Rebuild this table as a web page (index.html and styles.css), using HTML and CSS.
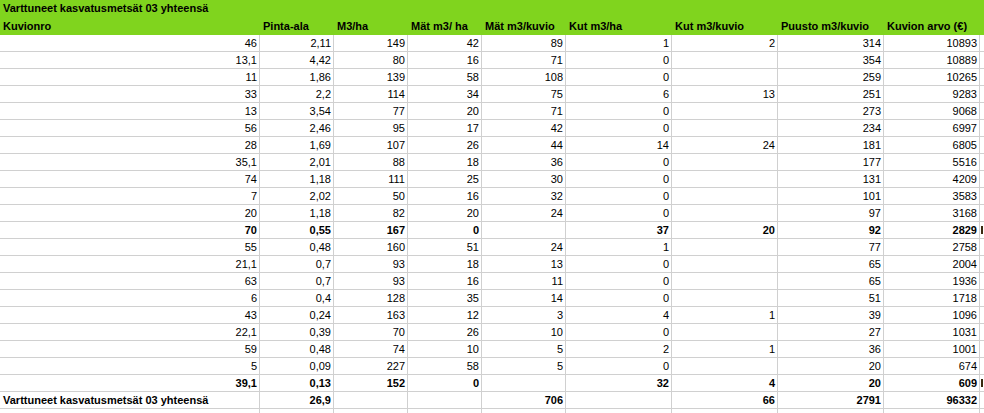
FILE: index.html
```html
<!DOCTYPE html>
<html lang="fi">
<head>
<meta charset="utf-8">
<title>Varttuneet kasvatusmetsät 03 yhteensä</title>
<link rel="stylesheet" href="styles.css">
</head>
<body>
<div class="sheet">
  <div class="title">Varttuneet kasvatusmetsät 03 yhteensä</div>

  <div class="h">Kuvionro</div><div class="h">Pinta-ala</div><div class="h">M3/ha</div><div class="h">Mät m3/ ha</div><div class="h">Mät m3/kuvio</div><div class="h">Kut m3/ha</div><div class="h">Kut m3/kuvio</div><div class="h">Puusto m3/kuvio</div><div class="h">Kuvion arvo (€)</div><div class="h"></div>

  <div class="c">46</div><div class="c">2,11</div><div class="c">149</div><div class="c">42</div><div class="c">89</div><div class="c">1</div><div class="c">2</div><div class="c">314</div><div class="c">10893</div><div class="c x"></div>
  <div class="c">13,1</div><div class="c">4,42</div><div class="c">80</div><div class="c">16</div><div class="c">71</div><div class="c">0</div><div class="c"></div><div class="c">354</div><div class="c">10889</div><div class="c x"></div>
  <div class="c">11</div><div class="c">1,86</div><div class="c">139</div><div class="c">58</div><div class="c">108</div><div class="c">0</div><div class="c"></div><div class="c">259</div><div class="c">10265</div><div class="c x"></div>
  <div class="c">33</div><div class="c">2,2</div><div class="c">114</div><div class="c">34</div><div class="c">75</div><div class="c">6</div><div class="c">13</div><div class="c">251</div><div class="c">9283</div><div class="c x"></div>
  <div class="c">13</div><div class="c">3,54</div><div class="c">77</div><div class="c">20</div><div class="c">71</div><div class="c">0</div><div class="c"></div><div class="c">273</div><div class="c">9068</div><div class="c x"></div>
  <div class="c">56</div><div class="c">2,46</div><div class="c">95</div><div class="c">17</div><div class="c">42</div><div class="c">0</div><div class="c"></div><div class="c">234</div><div class="c">6997</div><div class="c x"></div>
  <div class="c">28</div><div class="c">1,69</div><div class="c">107</div><div class="c">26</div><div class="c">44</div><div class="c">14</div><div class="c">24</div><div class="c">181</div><div class="c">6805</div><div class="c x"></div>
  <div class="c">35,1</div><div class="c">2,01</div><div class="c">88</div><div class="c">18</div><div class="c">36</div><div class="c">0</div><div class="c"></div><div class="c">177</div><div class="c">5516</div><div class="c x"></div>
  <div class="c">74</div><div class="c">1,18</div><div class="c">111</div><div class="c">25</div><div class="c">30</div><div class="c">0</div><div class="c"></div><div class="c">131</div><div class="c">4209</div><div class="c x"></div>
  <div class="c">7</div><div class="c">2,02</div><div class="c">50</div><div class="c">16</div><div class="c">32</div><div class="c">0</div><div class="c"></div><div class="c">101</div><div class="c">3583</div><div class="c x"></div>
  <div class="c">20</div><div class="c">1,18</div><div class="c">82</div><div class="c">20</div><div class="c">24</div><div class="c">0</div><div class="c"></div><div class="c">97</div><div class="c">3168</div><div class="c x"></div>
  <div class="c b">70</div><div class="c b">0,55</div><div class="c b">167</div><div class="c b">0</div><div class="c b"></div><div class="c b">37</div><div class="c b">20</div><div class="c b">92</div><div class="c b">2829</div><div class="c x"><span class="mark"></span></div>
  <div class="c">55</div><div class="c">0,48</div><div class="c">160</div><div class="c">51</div><div class="c">24</div><div class="c">1</div><div class="c"></div><div class="c">77</div><div class="c">2758</div><div class="c x"></div>
  <div class="c">21,1</div><div class="c">0,7</div><div class="c">93</div><div class="c">18</div><div class="c">13</div><div class="c">0</div><div class="c"></div><div class="c">65</div><div class="c">2004</div><div class="c x"></div>
  <div class="c">63</div><div class="c">0,7</div><div class="c">93</div><div class="c">16</div><div class="c">11</div><div class="c">0</div><div class="c"></div><div class="c">65</div><div class="c">1936</div><div class="c x"></div>
  <div class="c">6</div><div class="c">0,4</div><div class="c">128</div><div class="c">35</div><div class="c">14</div><div class="c">0</div><div class="c"></div><div class="c">51</div><div class="c">1718</div><div class="c x"></div>
  <div class="c">43</div><div class="c">0,24</div><div class="c">163</div><div class="c">12</div><div class="c">3</div><div class="c">4</div><div class="c">1</div><div class="c">39</div><div class="c">1096</div><div class="c x"></div>
  <div class="c">22,1</div><div class="c">0,39</div><div class="c">70</div><div class="c">26</div><div class="c">10</div><div class="c">0</div><div class="c"></div><div class="c">27</div><div class="c">1031</div><div class="c x"></div>
  <div class="c">59</div><div class="c">0,48</div><div class="c">74</div><div class="c">10</div><div class="c">5</div><div class="c">2</div><div class="c">1</div><div class="c">36</div><div class="c">1001</div><div class="c x"></div>
  <div class="c">5</div><div class="c">0,09</div><div class="c">227</div><div class="c">58</div><div class="c">5</div><div class="c">0</div><div class="c"></div><div class="c">20</div><div class="c">674</div><div class="c x"></div>
  <div class="c b">39,1</div><div class="c b">0,13</div><div class="c b">152</div><div class="c b">0</div><div class="c b"></div><div class="c b">32</div><div class="c b">4</div><div class="c b">20</div><div class="c b">609</div><div class="c x"><span class="mark"></span></div>
  <div class="c b l">Varttuneet kasvatusmetsät 03 yhteensä</div><div class="c b">26,9</div><div class="c b"></div><div class="c b"></div><div class="c b">706</div><div class="c b"></div><div class="c b">66</div><div class="c b">2791</div><div class="c b">96332</div><div class="c x"></div>

  <div class="c e"></div><div class="c e"></div><div class="c e"></div><div class="c e"></div><div class="c e"></div><div class="c e"></div><div class="c e"></div><div class="c e"></div><div class="c e"></div><div class="c e x"></div>
</div>
</body>
</html>
```

FILE: styles.css
```css
html, body {
  margin: 0;
  padding: 0;
  background: #ffffff;
  overflow: hidden;
}

body {
  width: 984px;
  height: 413px;
  font-family: "Liberation Sans", Arial, sans-serif;
  font-size: 11px;
  color: #000;
}

.sheet {
  display: grid;
  grid-template-columns: 260px 74px 74px 74px 84px 106px 106px 106px 96px 4px;
  width: 984px;
}

.title {
  grid-column: 1 / -1;
  background: #80d41e;
  height: 17px;
  line-height: 17px;
  padding-left: 3px;
  font-weight: bold;
  white-space: nowrap;
}

.h {
  background: #80d41e;
  height: 18px;
  line-height: 18px;
  padding-left: 3px;
  font-weight: bold;
  white-space: nowrap;
  overflow: hidden;
}

.c {
  box-sizing: border-box;
  height: 17px;
  line-height: 16px;
  border-right: 1px solid #d0d0d0;
  border-bottom: 1px solid #d0d0d0;
  padding: 0 2px 0 2px;
  text-align: right;
  white-space: nowrap;
  overflow: hidden;
}

.b {
  font-weight: bold;
}

.l {
  text-align: left;
  padding-left: 3px;
}

.x {
  padding: 0;
  border-right: none;
  display: flex;
  align-items: flex-start;
}

.mark {
  display: block;
  width: 2px;
  height: 8px;
  margin: 4px 0 0 1px;
  background: #3a2a10;
}

.e {
  border-bottom: none;
  height: 6px;
}
```
